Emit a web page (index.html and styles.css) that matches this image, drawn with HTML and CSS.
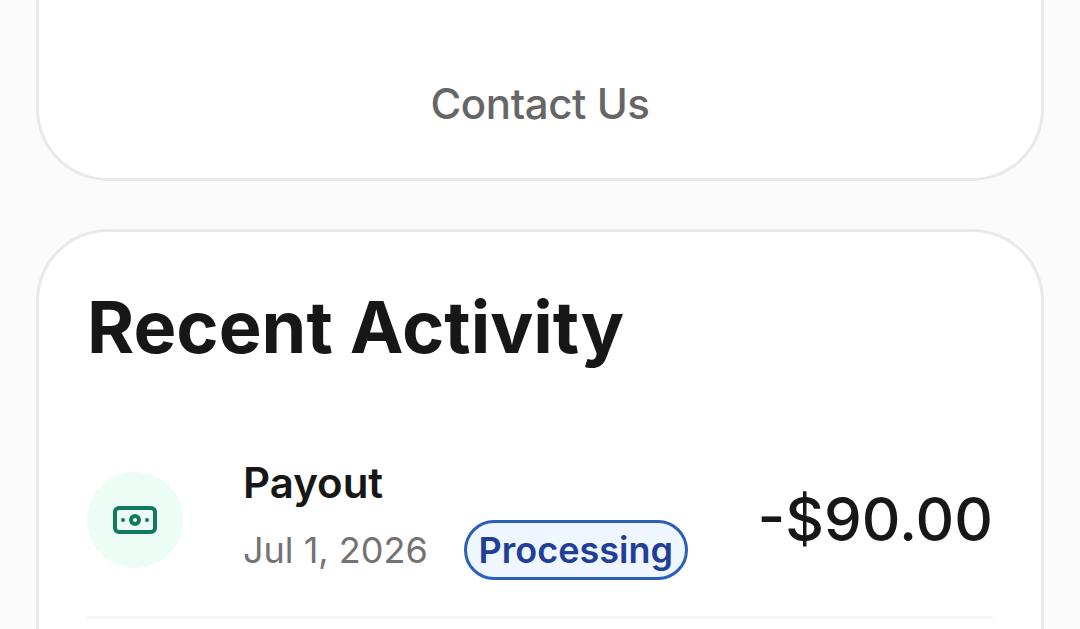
FILE: index.html
```html
<!DOCTYPE html>
<html lang="en">
<head>
<meta charset="utf-8">
<title>Recent Activity</title>
<link rel="stylesheet" href="styles.css">
</head>
<body>
<main class="page">
  <section class="card contact-card">
    <a class="contact">Contact Us</a>
  </section>
  <section class="card activity-card">
    <h1 class="title">Recent Activity</h1>
    <div class="row">
      <div class="icon">
        <svg viewBox="0 0 24 24" width="48" height="48" fill="none" stroke="#12795a" stroke-width="2" stroke-linecap="round" stroke-linejoin="round"><rect x="2" y="6" width="20" height="12" rx="2"/><circle cx="12" cy="12" r="2"/><path d="M6 12h.01M18 12h.01"/></svg>
      </div>
      <div class="details">
        <div class="name">Payout</div>
        <div class="meta"><span class="date">Jul 1, 2026</span><span class="badge">Processing</span></div>
      </div>
      <div class="amount">-$90.00</div>
    </div>
  </section>
</main>
</body>
</html>
```

FILE: styles.css
```css
* { box-sizing: border-box; }
body { margin: 0; background: #fbfbfb; font-family: Inter, sans-serif; color: #171717; }
.page { height: 629px; overflow: hidden; padding: 0 36px; display: flex; flex-direction: column; gap: 48px; }
.card { background: #fff; border: 3px solid #e9e9e9; flex: none; }
.contact-card { height: 181px; border-top: 0; border-radius: 0 0 72px 72px; text-align: center; padding-top: 78px; }
.contact { font-size: 42px; line-height: 52px; font-weight: 500; letter-spacing: -0.42px; color: #666; }
.activity-card { height: 450px; border-bottom: 0; border-radius: 72px 72px 0 0; padding: 47px 48px 0; }
.title { margin: 0; font-size: 72px; line-height: 96px; font-weight: 700; }
.row { display: flex; align-items: center; height: 195px; margin-top: 49px; border-bottom: 3px solid #f6f6f6; }
.icon { width: 96px; height: 96px; border-radius: 50%; background: #ecfdf5; display: flex; align-items: center; justify-content: center; }
.details { margin-left: 60px; flex: 1; padding-bottom: 8px; }
.name { font-size: 42px; line-height: 60px; font-weight: 600; }
.meta { display: flex; align-items: center; gap: 36px; margin-top: 7px; }
.date { font-size: 36px; line-height: 60px; color: #737373; }
.badge { width: 224px; height: 60px; border: 3px solid #2a60b8; border-radius: 30px; background: #eff6ff; color: #213f97; font-size: 36px; line-height: 54px; font-weight: 600; text-align: center; }
.amount { font-size: 60px; line-height: 72px; font-weight: 500; padding-bottom: 2px; }
```
